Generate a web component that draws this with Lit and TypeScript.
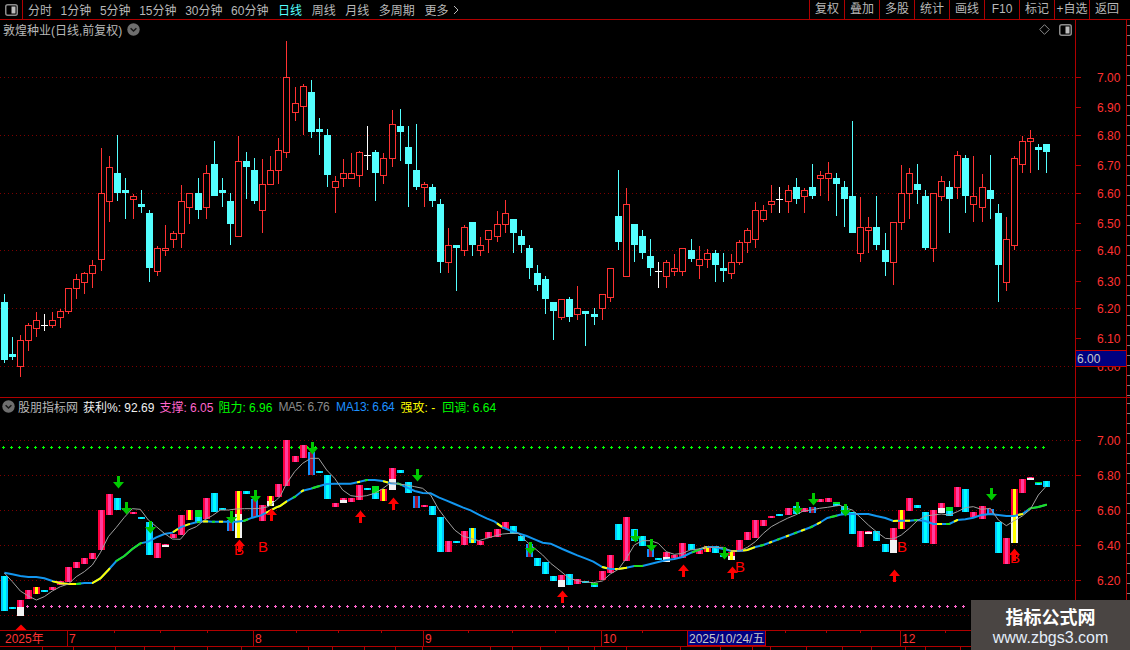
import { LitElement, html, css, svg } from "lit";
import { customElement } from "lit/decorators.js";

type Candle = [number, number, number, number, number, string];

const CANDLES: Candle[] = [
  [4,294,363,302,360,"c"],[12,337,360,354,357,"c"],[20,335,377,340,367,"r"],[28,323,351,325,341,"r"],
  [36,312,337,320,329,"r"],[44,314,331,325,326,"w"],[52,312,328,320,326,"r"],[60,309,328,311,318,"r"],
  [68,288,314,288,312,"r"],[76,274,299,279,289,"r"],[84,272,294,273,283,"r"],[92,260,288,265,274,"r"],
  [101,148,271,193,260,"r"],[109,156,222,167,202,"r"],[117,135,201,173,193,"c"],[125,178,219,190,193,"c"],
  [133,194,219,196,200,"r"],[141,190,213,204,207,"c"],[149,210,282,213,268,"c"],[157,246,276,248,272,"r"],
  [165,225,256,248,251,"r"],[173,231,248,233,240,"r"],[181,185,248,201,234,"r"],[189,193,224,193,208,"r"],
  [198,178,219,193,210,"c"],[206,165,219,173,208,"r"],[214,141,196,164,196,"c"],[222,178,207,190,193,"c"],
  [230,193,245,201,224,"c"],[238,136,237,161,237,"r"],[246,152,199,161,167,"c"],[254,158,204,170,201,"c"],
  [262,159,233,184,211,"r"],[270,156,185,170,185,"r"],[278,138,184,150,171,"r"],[286,41,158,77,153,"r"],
  [295,87,121,103,113,"r"],[303,84,135,86,107,"r"],[311,80,138,92,132,"c"],[319,118,155,129,132,"c"],
  [327,129,187,135,175,"c"],[335,176,213,181,188,"r"],[343,159,187,173,179,"r"],[351,153,179,173,179,"r"],
  [359,151,187,152,176,"r"],[367,126,170,155,156,"w"],[375,150,201,152,173,"c"],[383,153,184,158,176,"r"],
  [392,110,167,124,159,"r"],[400,109,161,126,132,"c"],[408,126,207,147,164,"c"],[416,124,190,170,187,"c"],
  [424,182,207,184,188,"r"],[432,184,207,187,201,"c"],[440,199,273,204,262,"c"],[448,228,273,245,263,"r"],
  [456,245,291,245,248,"c"],[464,225,256,227,251,"r"],[472,222,256,222,245,"c"],[480,237,256,245,251,"r"],
  [488,230,253,230,240,"r"],[497,211,242,224,237,"r"],[505,200,233,213,225,"r"],[513,219,253,219,233,"c"],
  [521,230,253,236,245,"c"],[529,245,279,248,268,"c"],[537,265,291,273,285,"c"],[545,276,314,279,299,"c"],
  [553,302,340,302,311,"c"],[561,299,320,299,318,"r"],[569,297,322,299,317,"c"],[577,286,320,308,315,"r"],
  [585,311,346,311,314,"c"],[594,308,325,314,317,"c"],[602,294,320,294,309,"r"],[610,268,302,268,298,"r"],
  [618,170,250,216,242,"c"],[626,188,277,204,277,"r"],[634,224,262,224,245,"c"],[642,230,259,236,253,"c"],
  [650,239,276,256,268,"c"],[658,262,288,271,272,"w"],[666,260,288,262,277,"r"],[674,254,276,268,272,"r"],
  [682,248,276,248,272,"r"],[691,239,262,250,259,"c"],[699,246,279,259,266,"r"],[707,249,268,253,260,"r"],
  [715,250,282,253,265,"c"],[723,253,282,268,271,"c"],[731,254,279,262,274,"r"],[739,240,265,242,263,"r"],
  [747,228,253,230,243,"r"],[755,202,248,210,240,"r"],[763,205,222,210,220,"r"],[771,185,213,201,205,"r"],
  [779,187,213,199,200,"w"],[788,185,213,190,202,"r"],[796,178,204,187,199,"c"],[804,188,213,190,197,"r"],
  [812,164,199,187,196,"c"],[820,171,196,175,179,"r"],[828,162,201,173,179,"r"],[836,173,216,178,184,"c"],
  [844,181,227,187,199,"c"],[852,121,233,196,233,"c"],[860,197,262,227,254,"r"],[868,217,253,227,231,"r"],
  [876,196,250,227,245,"c"],[885,233,276,250,262,"c"],[893,222,285,222,263,"r"],[901,165,230,193,223,"r"],
  [909,168,219,173,194,"r"],[917,164,204,184,190,"c"],[925,190,250,196,248,"c"],[933,193,262,193,249,"r"],
  [941,176,201,181,197,"r"],[949,181,233,187,199,"c"],[957,151,199,155,188,"r"],[965,155,213,158,196,"c"],
  [973,156,222,196,205,"r"],[982,174,222,187,208,"r"],[990,155,219,190,199,"c"],[998,204,302,213,265,"c"],
  [1006,217,291,239,283,"r"],[1014,156,250,158,246,"r"],[1022,136,173,141,165,"r"],[1030,130,173,138,142,"r"],
  [1038,144,170,147,150,"c"],[1046,144,173,144,152,"c"],
];

// Lower-panel bars that are not plain red/cyan: x -> [kind, top, bottom, split]
const BAR_OVERRIDES: Record<number, [string, number, number, number?]> = {
  20:["rw",600,616,607],36:["ry",587,594],44:["c",590,592],165:["rw",544,547,545],189:["ry",510,520],
  198:["gc",510,522,517],230:["b",520,531],238:["ryw",491,538,514],254:["b",499,517],270:["ryw",496,506,501],
  311:["b",452,475],343:["rw",498,503,500],367:["c",488,490],375:["gc",486,499,493],383:["ry",489,501],
  392:["rw",468,490,479],416:["b",496,508],472:["cy",528,543],529:["b",544,557],561:["rw",575,587,580],
  594:["gc",583,587,585],650:["b",549,557],658:["c",558,560],666:["rw",552,562,557],707:["ry",546,552],
  731:["ryw",552,560,556],771:["r",516,518],779:["c",514,516],812:["b",507,513],836:["gc",502,506,504],
  868:["rw",531,534,532],893:["rw",528,553,540],901:["ry",510,529],941:["rw",503,513,508],949:["gc",507,516,511],
  990:["b",509,515],1014:["ryw",489,543,516],1030:["rw",477,480,478],1038:["gc",482,485,483],1046:["c",481,487],
};

const z = (ox: number, pts: number[]) => {
  const out: [number, number][] = [];
  for (let i = 0; i < pts.length; i += 2) out.push([ox + pts[i] / 3, 430 + pts[i + 1] / 3]);
  return out;
};

const MA13 = [
  ...z(0,[13,428,37,433,61,438,85,441,109,441,133,445,157,453,181,460,205,462,229,462,253,459,277,459,301,445,325,420,349,393,373,378,397,357,421,340,445,335,469,322,493,312,517,308,541,292,565,283,589,277,613,274,637,275,661,275,685,275,709,275,733,272,757,263,781,257,805,245,829,232]),
  ...z(280,[0,228,20,214,44,201,68,182,92,176,116,169,140,162,164,161,188,161,212,161,236,156,260,150,284,150,308,153,332,160,356,161,380,172,404,183,428,189,452,190,476,202,500,212,524,222,548,232,572,241,596,254,620,265,644,275,668,292,692,302,716,310,740,318,764,328,788,338,812,341]),
  ...z(560,[7,357,28,366,52,376,76,385,100,395,127,411,151,417,175,417,199,413,223,408,247,408,271,402,295,396,319,390,343,387,367,381,391,369,415,360,439,351,463,351,490,357,514,363,538,363,562,360,586,351,610,345,634,336,658,327,682,318,706,309,730,300,754,291,778,279,802,264,826,258]),
  ...z(840,[0,254,13,253,37,252,61,252,85,252,109,258,136,264,160,273,184,272,208,272,232,270,256,273,280,282,304,282,328,282,352,270,376,268,400,263,424,255,451,252,475,255,499,258,523,258,547,252,571,235,595,231,619,224]),
];

const MA5 = [
  ...z(0,[13,429,37,455,61,483,85,498,109,510,133,500,157,483,181,470,205,462,229,440,253,425,277,405,301,368,325,320,349,292,373,262,397,236,421,238,445,270,469,290,493,310,517,327,541,328,565,300,589,290,613,270,637,257,661,240,685,240,709,237,733,236,757,236,781,235,805,230,829,210]),
  ...z(280,[0,200,20,160,44,125,68,100,92,85,116,85,140,120,164,145,188,180,212,197,236,200,260,197,284,190,308,176,332,158,356,162,380,165,404,170,428,175,452,195,476,238,500,270,524,300,548,318,572,325,596,332,620,325,644,318,668,312,692,310,716,310,740,335,764,355,788,375,812,400]),
  ...z(560,[0,422,28,445,52,452,76,456,100,458,127,453,151,432,175,418,199,385,223,345,247,332,271,332,295,340,319,365,343,373,367,370,391,360,415,357,439,351,463,352,490,352,514,363,538,363,562,352,586,335,610,310,634,290,658,277,682,265,706,255,730,243,754,240,778,235,802,232,826,228]),
  ...z(840,[0,226,13,233,37,240,61,262,85,285,109,305,136,325,160,327,184,315,208,295,232,272,256,258,280,255,304,252,328,255,352,245,376,233,400,230,424,238,451,235,475,270,499,287,523,272,547,258,571,238,595,195,619,168]),
];

const YELLOW: [number, number][] = [[52,76],[92,110],[173,178],[185,190],[203,208],[219,223],[266,287],[301,304],[357,360],[383,388],[497,502],[602,607],[615,627],[703,707],[731,737],[743,755],[769,772],[786,789],[801,805],[817,821],[893,898],[905,910],[937,942],[954,958],[1018,1023]];
const GREEN: [number, number][] = [[76,81],[116,142],[197,200],[212,215],[243,248],[293,296],[312,320],[365,368],[397,402],[634,643],[692,700],[760,764],[777,780],[794,797],[810,813],[830,837],[914,917],[946,950],[1028,1047]];

const DOWN: [number, number][] = [[118,476],[126,502],[150,521],[231,511],[255,490],[312,442],[417,469],[530,542],[635,530],[651,539],[724,547],[797,502],[813,493],[845,504],[991,488]];
const UP: [number, number][] = [[239,540],[271,509],[360,511],[393,498],[562,591],[683,565],[732,567],[894,570],[1014,549]];
const BS: [number, number][] = [[239,555],[263,552],[740,572],[902,552],[1015,563]];
const BOTTOM_TICKS = [42,73,115,144,174,207,241,308,332,364,395,422,490,512,540,568,594,626,680,720,752,770,806,842,871,905,925,960];

const yAt = (x: number) => {
  for (let i = 1; i < MA13.length; i++) {
    const [x0, y0] = MA13[i - 1], [x1, y1] = MA13[i];
    if (x <= x1) return y0 + ((y1 - y0) * (x - x0)) / (x1 - x0 || 1);
  }
  return MA13[MA13.length - 1][1];
};
const segPts = ([a, b]: [number, number]) => {
  const pts = [[a, yAt(a)]];
  for (const [x, y] of MA13) if (x > a && x < b) pts.push([x, y]);
  pts.push([b, yAt(b)]);
  return pts.map((p) => p.join(",")).join(" ");
};
const toLower = (y: number) => Math.round(440 + ((y - 77) * 35) / 58);

const MAIN_GRID = [77, 135, 193, 250, 308, 366];
const LOWER_GRID = [440, 475, 510, 545, 580, 615];
const MAIN_LABELS: [string, number][] = [["7.00",77],["6.90",107],["6.80",135],["6.70",165],["6.60",193],["6.50",223],["6.40",250],["6.30",281],["6.20",308],["6.10",338]];
const LOWER_LABELS: [string, number][] = [["7.00",440],["6.80",475],["6.60",510],["6.40",545],["6.20",580]];

const range = (a: number, b: number, s: number) => {
  const r: number[] = [];
  for (let v = a; v <= b; v += s) r.push(v);
  return r;
};

const candleMark = ([x, wt, wb, bt, bb, k]: Candle) => {
  if (k === "w")
    return svg`<rect class="white" x=${x} y=${wt} width="1" height=${wb - wt}></rect><rect class="white" x=${x - 3} y=${bt} width="7" height="1"></rect>`;
  if (k === "c")
    return svg`<rect class="cyan" x=${x} y=${wt} width="1" height=${wb - wt}></rect><rect class="cyan" x=${x - 3} y=${bt} width="7" height=${bb - bt}></rect>`;
  return svg`<rect class="red" x=${x} y=${wt} width="1" height=${wb - wt}></rect><rect class="red" x=${x - 3} y=${bt} width="7" height=${bb - bt}></rect><rect class="hollow" x=${x - 2} y=${bt + 1} width="5" height=${Math.max(bb - bt - 2, 1)}></rect>`;
};

const piece = (x: number, t: number, b: number, outer: string, inner: string) =>
  svg`<rect class=${outer} x=${x - 3} y=${t} width="7" height=${b - t}></rect><rect class=${inner} x=${x - 1} y=${t} width="3" height=${b - t}></rect>`;

const barMark = ([x, , , bt, bb, k]: Candle) => {
  const o = BAR_OVERRIDES[x];
  const kind = o ? o[0] : k === "c" ? "c" : "r";
  const t = o ? o[1] : toLower(bt);
  const b = o ? o[2] : Math.max(toLower(bb), t + 2);
  const s = o?.[3] ?? 0;
  switch (kind) {
    case "c": return piece(x, t, b, "b-cy1", "b-cy2");
    case "ry": return piece(x, t, b, "b-red", "b-yel");
    case "cy": return piece(x, t, b, "b-cy1", "b-yel");
    case "b": return piece(x, t, b, "b-blue", "b-dark");
    case "rw": return svg`${piece(x, t, s, "b-red", "b-pink")}${piece(x, s, b, "b-white", "b-white")}`;
    case "ryw": return svg`${piece(x, t, s, "b-red", "b-yel")}${piece(x, s, b, "b-white", "b-yel")}`;
    case "gc": return svg`${piece(x, t, s, "b-grn", "b-grn")}${piece(x, s, b, "b-cy1", "b-cy2")}`;
    default: return piece(x, t, b, "b-red", "b-pink");
  }
};

const downArrow = ([x, y]: [number, number]) =>
  svg`<path class="arrow-g" d="M${x - 1} ${y}h3v6h4l-5.5 6.5-5.5-6.5h4z"></path>`;
const upArrow = ([x, y]: [number, number]) =>
  svg`<path class="arrow-r" d="M${x - 1} ${y + 12}h3v-6h4l-5.5-6.5-5.5 6.5h4z"></path>`;

const PERIODS = ["分时","1分钟","5分钟","15分钟","30分钟","60分钟","日线","周线","月线","多周期"];
const ACTIONS = ["复权","叠加","多股","统计","画线","F10","标记","+自选","返回"];

const panelIcon = svg`<svg class="ico" width="13" height="12" viewBox="0 0 13 12"><rect x="0.75" y="0.75" width="11.5" height="10.5" rx="2" fill="none" stroke="#8c8c8c" stroke-width="1.5"></rect><rect x="6.5" y="2.5" width="4" height="7" fill="#bdbdbd"></rect></svg>`;
const chevronIcon = svg`<svg class="ico" width="13" height="13" viewBox="0 0 13 13"><circle cx="6.5" cy="6.5" r="6.2" fill="#6e6e6e"></circle><path d="M3.6 5.2 6.5 8l2.9-2.8" fill="none" stroke="#161616" stroke-width="1.5"></path></svg>`;

@customElement("app-root")
export class AppRoot extends LitElement {
  static styles = css`
    :host {
      display: block;
      position: relative;
      width: 1130px;
      height: 650px;
      overflow: hidden;
      background: #000;
      font: 12px "Liberation Sans", "Noto Sans CJK SC", sans-serif;
      color: #b8b8b8;
    }
    svg { display: block; }
    svg.ico { flex: none; }
    .toolbar {
      display: flex;
      align-items: center;
      height: 19px;
      border-bottom: 1px solid #b00000;
    }
    .tb-left {
      display: flex;
      align-items: center;
      justify-content: center;
      width: 22px;
      height: 100%;
      border-right: 1px solid #b00000;
    }
    .periods {
      display: flex;
      align-items: center;
      gap: 8.6px;
      padding-left: 5px;
    }
    .periods span:nth-child(n + 7) { margin-left: 1px; }
    .periods .on { color: #54ffff; }
    .periods .more { display: flex; align-items: center; gap: 5px; margin-left: -1.6px; }
    .actions { display: flex; margin-left: auto; height: 100%; }
    .actions span {
      box-sizing: border-box;
      width: 35px;
      text-align: center;
      line-height: 19px;
      border-left: 1px solid #b00000;
    }
    .actions span:last-child { width: 41px; padding-right: 6px; }
    .pane { display: flex; }
    .main-pane { height: 377px; border-bottom: 1px solid #b00000; }
    .low-pane { height: 232px; }
    .plot { display: flex; flex-direction: column; width: 1075px; }
    .title {
      display: flex;
      align-items: center;
      height: 19px;
      padding-left: 3px;
      gap: 5px;
    }
    .title .grow { flex: 1; }
    .title .tools { display: flex; align-items: center; gap: 9px; padding-right: 3px; }
    .low-title { height: 17px; padding-left: 2px; gap: 0; }
    .low-title span { white-space: pre; }
    .low-title .name { margin: 0 5px 0 3px; }
    .w { color: #f0f0f0; margin-right: 5px; }
    .pk { color: #ff66cc; margin-right: 5px; }
    .gn { color: #00ff00; margin-right: 6px; }
    .gy { color: #8a8a8a; margin-right: 7px; letter-spacing: -0.45px; }
    .bl { color: #1e90ff; margin-right: 6px; letter-spacing: -0.3px; }
    .yl { color: #ffff00; margin-right: 7px; }
    .date-row { height: 15px; border-top: 1px solid #b00000; border-bottom: 1px solid #b00000; }
    .grid line { stroke: #7c0000; stroke-width: 1; stroke-dasharray: 1 3; shape-rendering: crispEdges; }
    .cyan { fill: #54ffff; shape-rendering: crispEdges; }
    .red { fill: #ff3232; shape-rendering: crispEdges; }
    .white { fill: #ffffff; shape-rendering: crispEdges; }
    .hollow { fill: #000; shape-rendering: crispEdges; }
    .b-red { fill: #ff0040; shape-rendering: crispEdges; }
    .b-pink { fill: #ff3d9e; shape-rendering: crispEdges; }
    .b-cy1 { fill: #00c8ff; shape-rendering: crispEdges; }
    .b-cy2 { fill: #00ffff; shape-rendering: crispEdges; }
    .b-yel { fill: #ffff00; shape-rendering: crispEdges; }
    .b-white { fill: #f2f2f2; shape-rendering: crispEdges; }
    .b-grn { fill: #00e020; shape-rendering: crispEdges; }
    .b-blue { fill: #1090ff; shape-rendering: crispEdges; }
    .b-dark { fill: #a01030; shape-rendering: crispEdges; }
    .ma5 { fill: none; stroke: #a0a0a0; stroke-width: 1; }
    .ma13 { fill: none; stroke: #1296f0; stroke-width: 2; }
    .ma13y { fill: none; stroke: #ffff00; stroke-width: 2; }
    .ma13g { fill: none; stroke: #20e020; stroke-width: 2; }
    .arrow-g { fill: #00c800; }
    .arrow-r { fill: #ff0000; }
    .dot-g { fill: #00ff00; shape-rendering: crispEdges; }
    .dot-p { fill: #ff66cc; shape-rendering: crispEdges; }
    .bs { fill: #ff0000; font-size: 15px; }
    .ax-line { stroke: #b00000; stroke-width: 1; shape-rendering: crispEdges; }
    .ax-tick { stroke: #808080; stroke-width: 1; shape-rendering: crispEdges; }
    .ax-text { fill: #ff3232; font-size: 12px; }
    .ax-box { fill: #000080; stroke: #c00000; stroke-width: 1; shape-rendering: crispEdges; }
    .ax-cur { fill: #c8c8c8; font-size: 12px; }
    .wm {
      position: absolute;
      left: 971px;
      top: 600px;
      width: 159px;
      height: 50px;
      background: #4a4543;
      display: flex;
      flex-direction: column;
      align-items: center;
      justify-content: center;
    }
    .wm b { color: #fff; font-size: 18px; line-height: 24px; font-weight: 700; font-family: "Noto Sans CJK SC", sans-serif; }
    .wm i { color: #e4eefa; font-size: 16px; line-height: 19px; font-style: normal; }
  `;

  private axisColumn(offset: number, h: number, labels: [string, number][], cur: boolean) {
    const ticks = range(offset + 5, offset + h, 10);
    return html`<svg width="55" height=${h} viewBox="1075 ${offset} 55 ${h}">
      <line class="ax-line" x1="1075.5" y1=${offset} x2="1075.5" y2=${offset + h}></line>
      <line class="ax-line" x1="1126.5" y1=${offset} x2="1126.5" y2=${offset + h}></line>
      ${ticks.map((y) => svg`<line class="ax-tick" x1="1127" x2="1130" y1=${y + 0.5} y2=${y + 0.5}></line>`)}
      ${labels.map(([t, y]) => svg`
        <line class="ax-line" x1="1075" x2="1081" y1=${y + 0.5} y2=${y + 0.5}></line>
        <text class="ax-text" x="1097" y=${y + 4.5}>${t}</text>`)}
      ${cur
        ? svg`<text class="ax-text" x="1097" y="371">6.00</text>
            <rect class="ax-box" x="1075.5" y="350.5" width="51" height="16"></rect>
            <text class="ax-cur" x="1077" y="362.5">6.00</text>`
        : ""}
    </svg>`;
  }

  private dateAxis() {
    const major: [number, string][] = [[67, "7"], [253, "8"], [423, "9"], [601, "10"], [900, "12"]];
    const minor = [114, 160, 207, 296, 338, 381, 468, 512, 555, 642, 785, 826, 860, 945];
    return html`<svg width="1130" height="15" viewBox="0 631 1130 15">
      ${major.map(([x, t]) => svg`
        <line class="ax-line" x1=${x + 0.5} x2=${x + 0.5} y1="631" y2="646"></line>
        <text class="ax-text" x=${x + 2} y="643">${t}</text>`)}
      ${minor.map((x) => svg`<line class="ax-line" x1=${x + 0.5} x2=${x + 0.5} y1="631" y2="633"></line>`)}
      <text class="ax-text" x="5" y="643">2025年</text>
      <rect class="ax-box" x="687.5" y="630.5" width="78" height="15"></rect>
      <text class="ax-cur" x="689" y="643">2025/10/24/五</text>
    </svg>`;
  }

  render() {
    return html`
      <div class="toolbar">
        <div class="tb-left">${panelIcon}</div>
        <div class="periods">
          ${PERIODS.map((p) => html`<span class=${p === "日线" ? "on" : ""}>${p}</span>`)}
          <span class="more">更多
            <svg class="ico" width="6" height="10" viewBox="0 0 6 10"><path d="M1 1l4 4-4 4" fill="none" stroke="#b8b8b8"></path></svg>
          </span>
        </div>
        <div class="actions">${ACTIONS.map((a) => html`<span>${a}</span>`)}</div>
      </div>

      <section class="pane main-pane">
        <div class="plot">
          <div class="title">
            <span>敦煌种业(日线,前复权)</span>
            ${chevronIcon}
            <span class="grow"></span>
            <span class="tools">
              <svg class="ico" width="11" height="11" viewBox="0 0 11 11"><path d="M5.5.7 10.3 5.5 5.5 10.3.7 5.5z" fill="none" stroke="#8c8c8c"></path></svg>
              ${panelIcon}
            </span>
          </div>
          <svg width="1075" height="358" viewBox="0 39 1075 358">
            <g class="grid">${MAIN_GRID.map((y) => svg`<line x1="0" x2="1075" y1=${y + 0.5} y2=${y + 0.5}></line>`)}</g>
            ${CANDLES.map(candleMark)}
          </svg>
        </div>
        ${this.axisColumn(20, 377, MAIN_LABELS, true)}
      </section>

      <section class="pane low-pane">
        <div class="plot">
          <div class="title low-title">
            ${chevronIcon}
            <span class="name">股朋指标网</span>
            <span class="w">获利%: 92.69</span>
            <span class="pk">支撑: 6.05</span>
            <span class="gn">阻力: 6.96</span>
            <span class="gy">MA5: 6.76</span>
            <span class="bl">MA13: 6.64</span>
            <span class="yl">强攻: -</span>
            <span class="gn">回调: 6.64</span>
          </div>
          <svg width="1075" height="215" viewBox="0 415 1075 215">
            <g class="grid">${LOWER_GRID.map((y) => svg`<line x1="0" x2="1075" y1=${y + 0.5} y2=${y + 0.5}></line>`)}</g>
            ${range(3, 1045, 8).map((x) => svg`<path class="dot-g" d="M${x} 446h1v1h1v1h-1v1h-1v-1h-1v-1h1z"></path>`)}
            ${range(27, 968, 8).map((x) => svg`<path class="dot-p" d="M${x} 605h1v1h1v1h-1v1h-1v-1h-1v-1h1z"></path>`)}
            ${CANDLES.map(barMark)}
            <polyline class="ma13" points=${MA13.map((p) => p.join(",")).join(" ")}></polyline>
            ${YELLOW.map((r) => svg`<polyline class="ma13y" points=${segPts(r)}></polyline>`)}
            ${GREEN.map((r) => svg`<polyline class="ma13g" points=${segPts(r)}></polyline>`)}
            <polyline class="ma5" points=${MA5.map((p) => p.join(",")).join(" ")}></polyline>
            ${DOWN.map(downArrow)}
            ${UP.map(upArrow)}
            <path class="arrow-r" d="M15.5 630l5.5-5.5 5.5 5.5z"></path>
            ${BS.map(([x, y]) => svg`<text class="bs" x=${x - 5} y=${y}>B</text>`)}
          </svg>
        </div>
        ${this.axisColumn(398, 232, LOWER_LABELS, false)}
      </section>

      <div class="date-row">${this.dateAxis()}</div>
      <svg width="1130" height="3" viewBox="0 647 1130 3">
        ${BOTTOM_TICKS.map((x) => svg`<line class="ax-line" x1=${x + 0.5} x2=${x + 0.5} y1="647" y2="650"></line>`)}
      </svg>

      <div class="wm"><b>指标公式网</b><i>www.zbgs3.com</i></div>
    `;
  }
}
